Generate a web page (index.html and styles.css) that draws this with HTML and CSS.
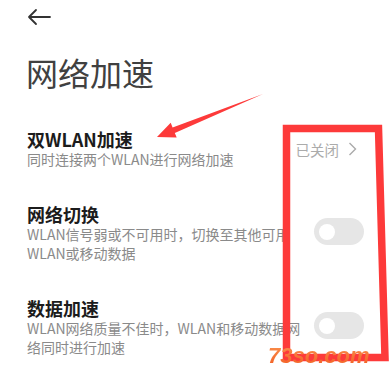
FILE: index.html
```html
<!DOCTYPE html>
<html lang="zh-CN">
<head>
<meta charset="utf-8">
<title>网络加速</title>
<link rel="stylesheet" href="styles.css">
</head>
<body>
<div class="page">
  <header class="topbar">
    <svg class="back" width="24" height="18" viewBox="0 0 24 18">
      <path d="M2 9 H23 M9 2 L2 9 L9 16" fill="none" stroke="#333" stroke-width="1.8" stroke-linecap="round" stroke-linejoin="round"/>
    </svg>
  </header>
  <h1 class="title">网络加速</h1>
  <div class="list">
    <div class="row">
      <div class="text">
        <div class="row-title">双WLAN加速</div>
        <div class="row-sub">同时连接两个WLAN进行网络加速</div>
      </div>
      <div class="value">已关闭<svg class="chev" width="9" height="14" viewBox="0 0 9 14"><path d="M1.5 1 L7.5 7 L1.5 13" fill="none" stroke="#aaa" stroke-width="1.4"/></svg></div>
    </div>
    <div class="row">
      <div class="text">
        <div class="row-title">网络切换</div>
        <div class="row-sub">WLAN信号弱或不可用时，切换至其他可用WLAN或移动数据</div>
      </div>
      <div class="toggle"><span class="knob"></span></div>
    </div>
    <div class="row">
      <div class="text">
        <div class="row-title">数据加速</div>
        <div class="row-sub">WLAN网络质量不佳时，WLAN和移动数据网络同时进行加速</div>
      </div>
      <div class="toggle"><span class="knob"></span></div>
    </div>
  </div>
  <svg class="annot" width="391" height="372" viewBox="0 0 391 372">
    <polygon points="286.5,128.5 378.5,128.5 385,357.5 286.5,357.5" fill="none" stroke="#fd3a3a" stroke-width="7.5" stroke-linejoin="miter"/>
    <polygon points="157,137 170.7,122.8 172.6,127.4 263,94 174.8,133 176.7,137.6" fill="#fd3a3a"/>
  </svg>
  <div class="watermark">73so.com</div>
</div>
</body>
</html>
```
FILE: styles.css
```css
* { box-sizing: border-box; }
html, body { margin: 0; padding: 0; background: #fff; }
body {
  font-family: "Noto Sans CJK SC", "Noto Sans", sans-serif;
  color: #222;
}
.page {
  position: relative;
  width: 391px;
  height: 372px;
  overflow: hidden;
}
.topbar {
  height: 34px;
  display: flex;
  align-items: center;
  padding-left: 27px;
}
.back { display: block; }
.title {
  margin: 18px 0 0;
  padding-left: 26px;
  font-size: 32px;
  line-height: 40px;
  font-weight: 400;
  color: #404040;
}
.list {
  margin-top: 20px;
}
.row {
  display: flex;
  align-items: center;
  gap: 11px;
  padding: 17px 27px;
}
.text {
  flex: 1;
  min-width: 0;
}
.row-title {
  font-size: 18px;
  line-height: 21px;
  font-weight: 700;
  color: #1c1c1c;
}
.row-sub {
  font-size: 14px;
  line-height: 19.5px;
  color: #8a8a8a;
}
.value {
  display: flex;
  align-items: center;
  gap: 9px;
  margin-right: 7px;
  font-size: 14.5px;
  color: #ababab;
}
.chev { display: block; }
.toggle {
  width: 50px;
  height: 27px;
  border-radius: 14px;
  background: #e6e6e6;
  display: flex;
  align-items: center;
  padding-left: 5px;
  margin-bottom: 4px;
}
.knob {
  width: 16px;
  height: 16px;
  border-radius: 50%;
  background: #fff;
}
.annot {
  position: absolute;
  left: 0;
  top: 0;
}
.watermark {
  position: absolute;
  left: 268px;
  top: 343px;
  font-family: "Liberation Sans", Arial, sans-serif;
  font-weight: 700;
  font-style: italic;
  font-size: 22px;
  line-height: 26px;
  color: #f56a2e;
  background: linear-gradient(#fa9450, #f2581f);
  -webkit-background-clip: text;
  background-clip: text;
  -webkit-text-fill-color: transparent;
}
```
